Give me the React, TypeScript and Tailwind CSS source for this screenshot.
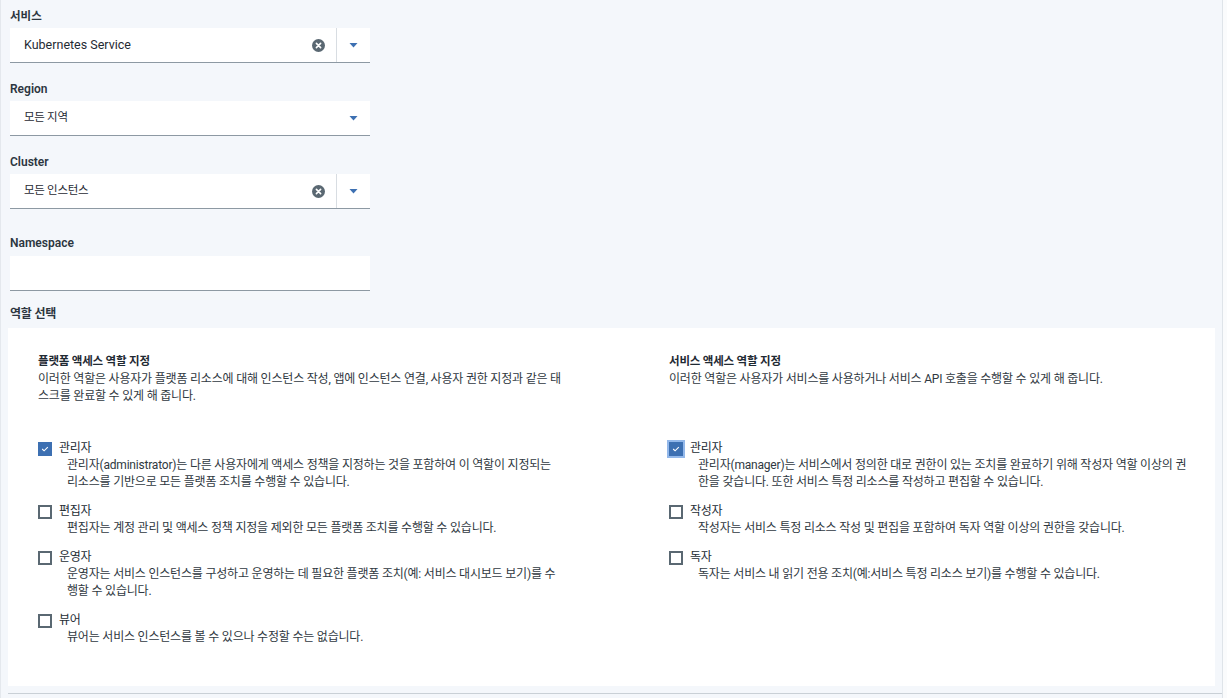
import React from "react";

function ClearIcon() {
  return (
    <svg width="13" height="13" viewBox="0 0 13 13" className="shrink-0">
      <circle cx="6.5" cy="6.5" r="6.5" fill="#5a6872" />
      <path d="M4.4 4.4 L8.6 8.6 M8.6 4.4 L4.4 8.6" stroke="#ffffff" strokeWidth="1.6" strokeLinecap="round" />
    </svg>
  );
}

function Caret() {
  return (
    <svg width="9" height="5" viewBox="0 0 9 5">
      <polygon points="0.5,0 8.5,0 4.5,4.4" fill="#3d70b2" />
    </svg>
  );
}

function Select({ value, clearable }: { value: string; clearable?: boolean }) {
  const korean = /[가-힣]/.test(value);
  return (
    <div className="flex h-[35px] w-[360px] items-stretch border-b border-[#8d99a3] bg-white">
      <div
        className={
          korean
            ? "flex flex-1 items-center pl-[14px] text-[11.5px] tracking-[-0.3px] text-[#1f2a33]"
            : "flex flex-1 items-center pl-[14px] text-[12.5px] text-[#1f2a33]"
        }
      >
        {value}
      </div>
      {clearable ? (
        <div className="flex items-center">
          <div className="mr-[11px] flex items-center">
            <ClearIcon />
          </div>
          <div className="h-full w-px bg-[#d8dde2]" />
        </div>
      ) : null}
      <div className="flex w-[33px] items-center justify-center">
        <Caret />
      </div>
    </div>
  );
}

function Checkbox({ checked, focused }: { checked?: boolean; focused?: boolean }) {
  if (checked) {
    return (
      <div
        className={
          focused
            ? "flex h-[14px] w-[14px] shrink-0 items-center justify-center bg-[#3d70b2] outline-2 outline-[#93b8ea]"
            : "flex h-[14px] w-[14px] shrink-0 items-center justify-center bg-[#3d70b2]"
        }
      >
        <svg width="8" height="6" viewBox="0 0 8 6">
          <path d="M1.2 3 L3.1 4.8 L6.8 1.2" fill="none" stroke="#ffffff" strokeWidth="1.1" />
        </svg>
      </div>
    );
  }
  return <div className="h-[14px] w-[14px] shrink-0 border-2 border-[#5a6872] bg-white" />;
}

type Role = { name: string; lines: string[]; checked?: boolean; focused?: boolean };

function RoleItem({ role }: { role: Role }) {
  return (
    <div>
      <div className="flex h-[17px] items-center">
        <Checkbox checked={role.checked} focused={role.focused} />
        <span className="ml-[7px] text-[12px] leading-[17px] tracking-[-0.3px] text-[#252d35]">{role.name}</span>
      </div>
      <div className="pl-[29px] text-[12px] leading-[17px] tracking-[-0.2px] text-[#2f3841]">
        {role.lines.map((l, i) => (
          <div key={i} className="whitespace-nowrap">
            {l}
          </div>
        ))}
      </div>
    </div>
  );
}

function RoleColumn({ title, desc, roles }: { title: string; desc: string[]; roles: Role[] }) {
  return (
    <div>
      <div className="min-h-[54px]">
        <div className="text-[11.5px] font-semibold leading-[20px] tracking-[-0.2px] text-[#1f2a33]">{title}</div>
        {desc.map((d, i) => (
          <div key={i} className="whitespace-nowrap text-[12px] leading-[17px] tracking-[-0.2px] text-[#2f3841]">
            {d}
          </div>
        ))}
      </div>
      <div className="mt-[35px] flex flex-col gap-[12px]">
        {roles.map((r) => (
          <RoleItem key={r.name} role={r} />
        ))}
      </div>
    </div>
  );
}

const platformRoles: Role[] = [
  {
    name: "관리자",
    checked: true,
    lines: [
      "관리자(administrator)는 다른 사용자에게 액세스 정책을 지정하는 것을 포함하여 이 역할이 지정되는",
      "리소스를 기반으로 모든 플랫폼 조치를 수행할 수 있습니다.",
    ],
  },
  {
    name: "편집자",
    lines: ["편집자는 계정 관리 및 액세스 정책 지정을 제외한 모든 플랫폼 조치를 수행할 수 있습니다."],
  },
  {
    name: "운영자",
    lines: [
      "운영자는 서비스 인스턴스를 구성하고 운영하는 데 필요한 플랫폼 조치(예: 서비스 대시보드 보기)를 수",
      "행할 수 있습니다.",
    ],
  },
  {
    name: "뷰어",
    lines: ["뷰어는 서비스 인스턴스를 볼 수 있으나 수정할 수는 없습니다."],
  },
];

const serviceRoles: Role[] = [
  {
    name: "관리자",
    checked: true,
    focused: true,
    lines: [
      "관리자(manager)는 서비스에서 정의한 대로 권한이 있는 조치를 완료하기 위해 작성자 역할 이상의 권",
      "한을 갖습니다. 또한 서비스 특정 리소스를 작성하고 편집할 수 있습니다.",
    ],
  },
  {
    name: "작성자",
    lines: ["작성자는 서비스 특정 리소스 작성 및 편집을 포함하여 독자 역할 이상의 권한을 갖습니다."],
  },
  {
    name: "독자",
    lines: ["독자는 서비스 내 읽기 전용 조치(예:서비스 특정 리소스 보기)를 수행할 수 있습니다."],
  },
];

export default function App() {
  return (
    <div className="flex min-h-[698px] w-full bg-[#f4f7fb] font-['Roboto','Noto_Sans_CJK_KR',sans-serif] text-[#1f2a33]">
      <div className="w-[1222px] shrink-0 border-l border-[#e4e8ed] pt-[8px]">
        <div className="pl-[9px]">
          <div className="mb-[4px] text-[11.5px] font-semibold leading-[16px] text-[#2c3640]">서비스</div>
          <Select value="Kubernetes Service" clearable />

          <div className="mb-[4px] mt-[18px] text-[12px] font-semibold leading-[16px] text-[#2c3640]">Region</div>
          <Select value="모든 지역" />

          <div className="mb-[4px] mt-[18px] text-[12px] font-semibold leading-[16px] text-[#2c3640]">Cluster</div>
          <Select value="모든 인스턴스" clearable />

          <div className="mb-[5px] mt-[26px] text-[12px] font-semibold leading-[16px] text-[#2c3640]">Namespace</div>
          <div className="h-[35px] w-[360px] border-b border-[#8d99a3] bg-white" />

          <div className="mb-[6px] mt-[15px] text-[12px] font-semibold leading-[16px] tracking-[-0.2px] text-[#2c3640]">역할 선택</div>
        </div>

        <div className="ml-[7px] grid w-[1207px] grid-cols-[631px_1fr] bg-white pb-[40px] pl-[30px] pt-[23px]">
          <RoleColumn
            title="플랫폼 액세스 역할 지정"
            desc={[
              "이러한 역할은 사용자가 플랫폼 리소스에 대해 인스턴스 작성, 앱에 인스턴스 연결, 사용자 권한 지정과 같은 태",
              "스크를 완료할 수 있게 해 줍니다.",
            ]}
            roles={platformRoles}
          />
          <RoleColumn
            title="서비스 액세스 역할 지정"
            desc={["이러한 역할은 사용자가 서비스를 사용하거나 서비스 API 호출을 수행할 수 있게 해 줍니다."]}
            roles={serviceRoles}
          />
        </div>

        <div className="ml-[7px] mt-[7px] border-t border-[#c9d0d6]" />
      </div>
      <div className="flex-1 border-l border-[#dfe4e9] bg-[#fafbfc]" />
    </div>
  );
}
